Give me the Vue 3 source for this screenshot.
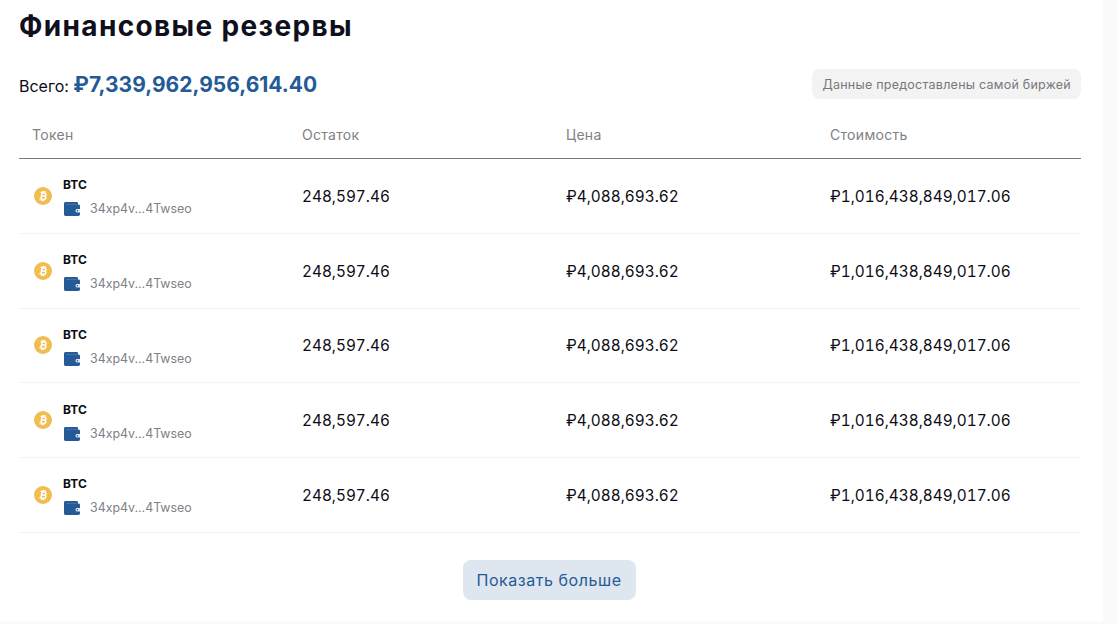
<script setup>
const columns = ['Токен', 'Остаток', 'Цена', 'Стоимость']
const rows = Array.from({ length: 5 }, (_, id) => ({
  id,
  token: 'BTC',
  address: '34xp4v...4Twseo',
  balance: '248,597.46',
  price: '₽4,088,693.62',
  value: '₽1,016,438,849,017.06',
}))
</script>

<template>
  <main class="panel">
    <h1 class="title">Финансовые резервы</h1>
    <div class="summary">
      <div class="total">Всего: <strong>₽7,339,962,956,614.40</strong></div>
      <span class="note">Данные предоставлены самой биржей</span>
    </div>
    <div class="table">
      <div class="row head">
        <span v-for="c in columns" :key="c">{{ c }}</span>
      </div>
      <div v-for="r in rows" :key="r.id" class="row item">
        <div class="token">
          <svg class="coin" viewBox="0 0 18 18" aria-hidden="true">
            <circle cx="9" cy="9" r="9" fill="#f0bd4f" />
            <g transform="rotate(10 9 9)">
              <path d="M7.5 5.4V12.6M6 5.8H9.9C11 5.8 11.7 6.4 11.7 7.3C11.7 8.2 11 8.9 9.9 8.9H7.5M7.5 8.9H10.2C11.4 8.9 12.1 9.6 12.1 10.5C12.1 11.5 11.4 12.2 10.2 12.2H6M8.4 3.9V5.8M10.2 3.9V5.8M8.4 12.2V14.1M10.2 12.2V14.1" fill="none" stroke="#fff" stroke-width="1.5" />
            </g>
          </svg>
          <div class="token-text">
            <div class="symbol">{{ r.token }}</div>
            <div class="address">
              <svg class="wallet" viewBox="0 0 16 14" aria-hidden="true">
                <path d="M1.5 0H12.6C13.5 0 14 .5 14 1.3V2.4H14.5C15.4 2.4 16 3 16 3.9V12.3C16 13.3 15.3 14 14.3 14H1.8C.8 14 0 13.2 0 12.2V1.5C0 .7 .7 0 1.5 0Z" fill="#245a95" />
                <path d="M2 2.4H14" stroke="#5c84b0" stroke-width="0.6" fill="none" />
                <path d="M16 7H13.2C12.2 7 11.5 7.7 11.5 8.7C11.5 9.7 12.2 10.4 13.2 10.4H16Z" fill="#dfe7f0" />
                <circle cx="13.4" cy="8.7" r="0.8" fill="#245a95" />
              </svg>
              <span>{{ r.address }}</span>
            </div>
          </div>
        </div>
        <div class="num">{{ r.balance }}</div>
        <div class="num">{{ r.price }}</div>
        <div class="num">{{ r.value }}</div>
      </div>
    </div>
    <div class="more">
      <button type="button" class="more-btn">Показать больше</button>
    </div>
  </main>
</template>

<style>
html, body { background: #fafafa; }
</style>

<style scoped>
.panel {
  box-sizing: border-box;
  width: 1103px;
  height: 621px;
  padding: 0 22px 0 19px;
  background: #fff;
  font-family: Inter, "Noto Sans", sans-serif;
  color: #0c0c14;
}
.title {
  margin: 0;
  padding-top: 8px;
  height: 45px;
  box-sizing: border-box;
  font-size: 28px;
  line-height: 36px;
  font-weight: 700;
  letter-spacing: 1.35px;
  color: #100f1c;
}
.summary {
  display: flex;
  justify-content: space-between;
  align-items: center;
  margin-top: 24px;
  height: 30px;
}
.total { font-size: 16px; }
.total strong {
  font-size: 21px;
  font-weight: 700;
  color: #245a95;
}
.note {
  padding: 0 10px;
  height: 30px;
  line-height: 31px;
  border-radius: 8px;
  background: #f3f3f3;
  color: #77777d;
  font-size: 12.5px;
  font-weight: 400;
  letter-spacing: 0.25px;
}
.row {
  display: grid;
  grid-template-columns: 270px 264px 264px 264px;
  align-items: center;
}
.row > * { padding-left: 13px; }
.head {
  height: 60px;
  padding-top: 12px;
  box-sizing: border-box;
  border-bottom: 1px solid #77777d;
  color: #808086;
  font-size: 14px;
  letter-spacing: 0.3px;
}
.item {
  height: 74.75px;
  box-sizing: border-box;
  border-bottom: 1px solid #f3f3f3;
  font-size: 15.35px;
}
.num {
  padding-top: 1px;
  font-variant-numeric: tabular-nums;
}
.token { display: flex; align-items: center; gap: 11px; padding-left: 15px; }
.coin { width: 18px; height: 18px; flex: none; }
.token-text { padding-top: 3px; }
.symbol { font-size: 12px; font-weight: 700; line-height: 16px; color: #0c0c14; }
.address {
  display: flex;
  align-items: center;
  gap: 10px;
  margin-top: 8px;
  margin-left: 1px;
  font-size: 12.4px;
  line-height: 16px;
  color: #808086;
}
.wallet { width: 16px; height: 14px; flex: none; }
.more { display: flex; justify-content: center; padding-top: 27px; }
.more-btn {
  width: 173px;
  height: 40px;
  margin-right: 2px;
  padding: 1px 0 0;
  border: 0;
  border-radius: 8px;
  background: #dee6ef;
  color: #245a95;
  font: 400 16px Inter, "Noto Sans", sans-serif;
  letter-spacing: 0.55px;
}
</style>
